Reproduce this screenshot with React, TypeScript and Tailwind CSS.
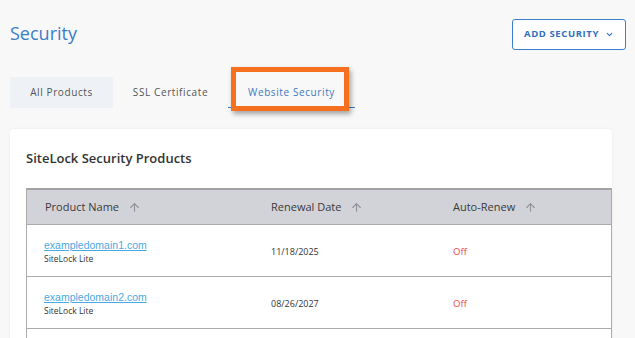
import { ChevronDown, ArrowUp } from "lucide-react"

const rows = [
  { domain: "exampledomain1.com", plan: "SiteLock Lite", date: "11/18/2025", renew: "Off" },
  { domain: "exampledomain2.com", plan: "SiteLock Lite", date: "08/26/2027", renew: "Off" },
  { domain: "", plan: "", date: "", renew: "" },
]

function SortHead({ label, className }: { label: string; className: string }) {
  return (
    <div className={`flex items-center gap-[9px] ${className}`}>
      <span>{label}</span>
      <ArrowUp className="w-[13px] h-[13px] text-[#909096]" strokeWidth={2} />
    </div>
  )
}

export default function App() {
  return (
    <div className="relative w-full h-[338px] overflow-hidden bg-[#f8f8f8] font-['Open_Sans',sans-serif]">
      <div className="flex justify-between items-start pl-[10px] pr-[9px] pt-[19px]">
        <h1 className="text-[18px] leading-[26px] text-[#3b7dc9] mt-[1px]">Security</h1>
        <button className="flex items-center justify-center gap-[6px] w-[114px] h-[31px] border border-[#3a7fcf] rounded-[3px] bg-white text-[#2f6fbf] text-[9.5px] font-bold tracking-[0.6px]">
          ADD SECURITY
          <ChevronDown className="w-[9px] h-[9px]" strokeWidth={3} />
        </button>
      </div>

      <div className="flex items-stretch pl-[10px] mt-[27px] h-[31px] text-[10px] tracking-[0.6px] text-[#555]">
        <div className="w-[103px] flex items-center justify-center bg-[#eef2f7]">All Products</div>
        <div className="w-[115px] flex items-center justify-center">SSL Certificate</div>
        <div className="w-[127px] flex items-center justify-center text-[#3f78c2] border-b border-[#3a7fcf]">Website Security</div>
      </div>

      <div className="absolute left-[231px] top-[67px] w-[118px] h-[44px] border-[5px] border-[#f5701f] shadow-[2px_3px_5px_rgba(0,0,0,0.35)]" />

      <div className="mt-[21px] ml-[10px] w-[602px] bg-white rounded-t-[4px] shadow-[0_0_3px_rgba(0,0,0,0.06)] pl-[16px] pt-[20px] pb-[20px]">
        <h2 className="text-[13px] leading-[18px] font-semibold text-[#333]">SiteLock Security Products</h2>
        <div className="mt-[21px] w-[586px] border-x border-[#ababab]">
          <div className="flex items-center h-[37px] bg-[#d2d3d8] border-t-2 border-[#a3a3a3] border-b border-b-[#ababab] text-[11px] text-[#3a3a3a]">
            <SortHead label="Product Name" className="w-[244px] pl-[18px]" />
            <SortHead label="Renewal Date" className="w-[182px]" />
            <SortHead label="Auto-Renew" className="flex-1" />
          </div>
          {rows.map((r, i) => (
            <div key={i} className="flex items-center h-[52px] pt-[3px] border-b border-[#ababab]">
              <div className="w-[244px] pl-[17px] flex flex-col">
                <a href="#" className="font-['Liberation_Sans',sans-serif] text-[10.5px] leading-[13px] text-[#4aa9e6] underline">{r.domain}</a>
                <span className="text-[8.5px] leading-[12px] mt-[1px] text-[#333]">{r.plan}</span>
              </div>
              <div className="w-[182px] text-[9px] text-[#333]">{r.date}</div>
              <div className="flex-1 text-[9.5px] text-[#e8474f]">{r.renew}</div>
            </div>
          ))}
        </div>
      </div>
    </div>
  )
}
